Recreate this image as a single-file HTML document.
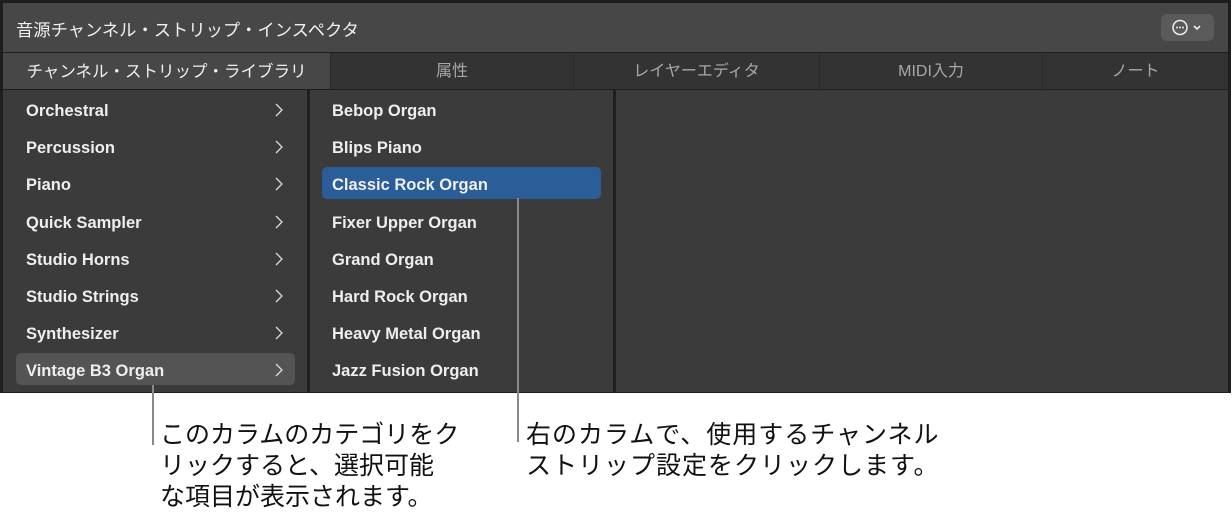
<!DOCTYPE html>
<html><head><meta charset="utf-8"><style>
*{margin:0;padding:0;box-sizing:border-box}
body{width:1232px;height:532px;background:#fff;position:relative;overflow:hidden;font-family:"Liberation Sans","Noto Sans CJK JP",sans-serif}
.p{position:absolute;left:0;top:0;width:1231px;height:393px;background:#1e1e1e}
.t{position:absolute;left:3px;top:3px;width:1225px;height:49px;background:#474747;color:#f0f0f0;font-size:17.3px;padding:13px 0 0 13px}
.btn{position:absolute;left:1161px;top:14px;width:53px;height:27px;background:#5a5a5a;border-radius:6px}
.tabs{position:absolute;left:3px;top:53px;width:1225px;height:36px;background:#333}
.tab{position:absolute;top:0;height:36px;color:#a8a8a8;font-size:16px;text-align:center;line-height:38px;border-left:1px solid #2a2a2a}
.c{position:absolute;top:90px;height:302px;background:#3b3b3b}
.r{position:absolute;font-size:16.5px;font-weight:bold;color:#eee;height:32px;line-height:36px}
.ch{position:absolute;right:8px;top:10px}
.ln{position:absolute;width:2px;background:#888}
.cap{position:absolute;font-size:25px;color:#111;line-height:31px}
</style></head><body>
<div class="p">
<div class="t">音源チャンネル・ストリップ・インスペクタ</div>
<div class="btn"><svg width="53" height="27"><circle cx="19" cy="13.5" r="7" fill="none" stroke="#eee" stroke-width="1.5"/><circle cx="16" cy="13.5" r="1" fill="#eee"/><circle cx="19" cy="13.5" r="1" fill="#eee"/><circle cx="22" cy="13.5" r="1" fill="#eee"/><path d="M33 12l3 3 3-3" fill="none" stroke="#eee" stroke-width="1.6"/></svg></div>
<div class="tabs">
<div class="tab" style="left:0;width:327px;background:#474747;color:#f0f0f0;border:none;font-size:16.5px">チャンネル・ストリップ・ライブラリ</div>
<div class="tab" style="left:327px;width:243px">属性</div>
<div class="tab" style="left:570px;width:246px">レイヤーエディタ</div>
<div class="tab" style="left:816px;width:223px">MIDI入力</div>
<div class="tab" style="left:1039px;width:186px">ノート</div>
</div>
<div class="c" style="left:3px;width:304px"></div>
<div class="c" style="left:310px;width:303px"></div>
<div class="c" style="left:616px;width:612px"></div>
<div class="r" style="left:16px;top:353px;width:279px;background:#545454;border-radius:5px"></div>
<div class="r" style="left:322px;top:167px;width:279px;background:#2b5e99;border-radius:5px"></div>
<div class="r" style="left:26px;top:93px;width:265px">Orchestral<svg class="ch" width="8" height="14"><path d="M1 1l6 6-6 6" fill="none" stroke="#ddd" stroke-width="1.3"/></svg></div>
<div class="r" style="left:26px;top:130px;width:265px">Percussion<svg class="ch" width="8" height="14"><path d="M1 1l6 6-6 6" fill="none" stroke="#ddd" stroke-width="1.3"/></svg></div>
<div class="r" style="left:26px;top:167px;width:265px">Piano<svg class="ch" width="8" height="14"><path d="M1 1l6 6-6 6" fill="none" stroke="#ddd" stroke-width="1.3"/></svg></div>
<div class="r" style="left:26px;top:205px;width:265px">Quick Sampler<svg class="ch" width="8" height="14"><path d="M1 1l6 6-6 6" fill="none" stroke="#ddd" stroke-width="1.3"/></svg></div>
<div class="r" style="left:26px;top:242px;width:265px">Studio Horns<svg class="ch" width="8" height="14"><path d="M1 1l6 6-6 6" fill="none" stroke="#ddd" stroke-width="1.3"/></svg></div>
<div class="r" style="left:26px;top:279px;width:265px">Studio Strings<svg class="ch" width="8" height="14"><path d="M1 1l6 6-6 6" fill="none" stroke="#ddd" stroke-width="1.3"/></svg></div>
<div class="r" style="left:26px;top:316px;width:265px">Synthesizer<svg class="ch" width="8" height="14"><path d="M1 1l6 6-6 6" fill="none" stroke="#ddd" stroke-width="1.3"/></svg></div>
<div class="r" style="left:26px;top:353px;width:265px">Vintage B3 Organ<svg class="ch" width="8" height="14"><path d="M1 1l6 6-6 6" fill="none" stroke="#ddd" stroke-width="1.3"/></svg></div>
<div class="r" style="left:332px;top:93px">Bebop Organ</div>
<div class="r" style="left:332px;top:130px">Blips Piano</div>
<div class="r" style="left:332px;top:167px">Classic Rock Organ</div>
<div class="r" style="left:332px;top:205px">Fixer Upper Organ</div>
<div class="r" style="left:332px;top:242px">Grand Organ</div>
<div class="r" style="left:332px;top:279px">Hard Rock Organ</div>
<div class="r" style="left:332px;top:316px">Heavy Metal Organ</div>
<div class="r" style="left:332px;top:353px">Jazz Fusion Organ</div>
</div>
<div class="ln" style="left:517px;top:198px;height:244px"></div>
<div class="ln" style="left:152px;top:385px;height:60px"></div>
<div class="cap" style="left:160px;top:420px">このカラムのカテゴリをク<br>リックすると、選択可能<br>な項目が表示されます。</div>
<div class="cap" style="left:526px;top:420px;letter-spacing:1px">右のカラムで、使用するチャンネル<br>ストリップ設定をクリックします。</div>
</body></html>
